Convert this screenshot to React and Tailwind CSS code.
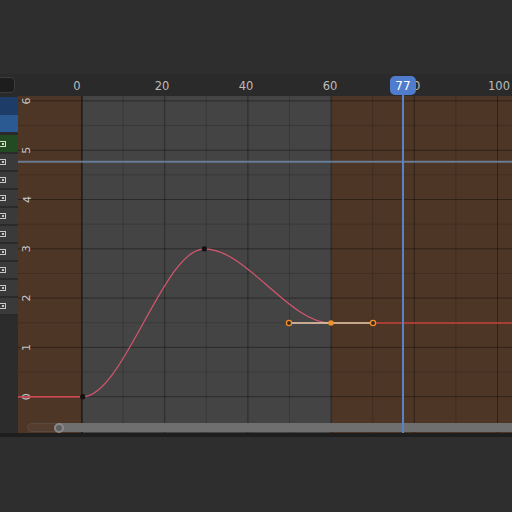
import React from "react";

const F = { fontFamily: '"DejaVu Sans", "Liberation Sans", sans-serif' };

const vx = (k) => 81.5 + 41.6 * k;
const vy = (k) => 396.7 - 49.3 * k;

function Graph() {
  const vLines = [];
  for (let k = 0; k <= 11; k++) {
    vLines.push(
      <line key={"v" + k} x1={vx(k)} x2={vx(k)} y1={96} y2={433}
        stroke={k % 2 === 0 ? "rgba(0,0,0,0.38)" : "rgba(0,0,0,0.16)"} strokeWidth={1} />
    );
  }
  const hLines = [];
  for (let k = 0; k <= 13; k++) {
    const y = vy(k / 2);
    hLines.push(
      <line key={"h" + k} x1={18} x2={512} y1={y} y2={y}
        stroke={k % 2 === 0 ? "rgba(0,0,0,0.38)" : "rgba(0,0,0,0.16)"} strokeWidth={1} />
    );
  }
  const labels = [0, 1, 2, 3, 4, 5, 6].map((v) => (
    <text key={"l" + v} x={27} y={vy(v)} transform={`rotate(-90 27 ${vy(v)})`}
      textAnchor="middle" dominantBaseline="central" fill="#c9c9c9" fontSize="11" style={F}>
      {v}
    </text>
  ));
  return (
    <svg width="494" height="337" viewBox="18 96 494 337" className="block">
      <rect x="18" y="96" width="494" height="337" fill="#4e3626" />
      <rect x="82" y="96" width="249" height="337" fill="#444444" />
      {vLines}
      {hLines}
      <line x1="82" x2="82" y1="96" y2="433" stroke="#1e1a17" strokeWidth="1.2" />
      <line x1="18" x2="512" y1="161.7" y2="161.7" stroke="#6f86a6" strokeWidth="2" opacity="0.85" />
      {labels}
      <path d="M18,396.7 L82.7,396.7 C123.2,396.7 163.8,248.8 204.3,248.8 C246.5,248.8 289,323 331,323"
        fill="none" stroke="#d4566f" strokeWidth="1.2" />
      <line x1="18" x2="82.7" y1="396.7" y2="396.7" stroke="#cc4a55" strokeWidth="1.4" />
      <line x1="373" x2="512" y1="323" y2="323" stroke="#c8443c" strokeWidth="1.4" />
      <line x1="289" x2="373" y1="323" y2="323" stroke="#f0d2b0" strokeWidth="1.3" />
      <circle cx="82.7" cy="396.7" r="2.6" fill="#111" />
      <circle cx="204.3" cy="248.8" r="2.6" fill="#111" />
      <circle cx="289" cy="323" r="2.6" fill="#3a2a1c" stroke="#f0902a" strokeWidth="1.3" />
      <circle cx="373" cy="323" r="2.6" fill="#3a2a1c" stroke="#f0902a" strokeWidth="1.3" />
      <circle cx="331" cy="323" r="2.8" fill="#f0902a" />
    </svg>
  );
}

function Ruler() {
  const items = [
    [77, "0"], [162, "20"], [246, "40"], [330, "60"], [413, "80"], [499, "100"],
  ];
  return (
    <svg width="494" height="22" viewBox="18 74 494 22" className="block">
      {items.map(([x, t]) => (
        <text key={t} x={x} y={86} textAnchor="middle" dominantBaseline="central"
          fill="#bdbdbd" fontSize="11.5" style={F}>{t}</text>
      ))}
    </svg>
  );
}

function ChanIcon({ green }) {
  return (
    <div className={`w-[7px] h-[6px] border ${green ? "border-[#cfe0c8]" : "border-[#c8c8c8]"} flex items-center justify-center ml-[-1px]`}>
      <div className={`w-[2px] h-[2px] ${green ? "bg-[#cfe0c8]" : "bg-[#c8c8c8]"}`} />
    </div>
  );
}

function Channels() {
  const grays = Array.from({ length: 9 });
  return (
    <div className="w-[18px] h-[337px] bg-[#2c2c2c] flex flex-col">
      <div className="h-[19px] bg-[#1d3d68] border-t border-[#2a2a2a]" />
      <div className="h-[17px] bg-[#2b5a93]" />
      <div className="h-[3px] bg-[#2a2a2a]" />
      <div className="h-[17px] bg-[#244a24] flex items-center border-b-[2px] border-[#2a2a2a] box-content">
        <ChanIcon green />
      </div>
      {grays.map((_, i) => (
        <div key={i} className="h-[16px] bg-[#3a3a3a] flex items-center border-b-[2px] border-[#2a2a2a] box-content">
          <ChanIcon />
        </div>
      ))}
    </div>
  );
}

export default function App() {
  return (
    <div className="w-[512px] h-[512px] bg-[#2e2e2e] flex flex-col overflow-hidden" style={F}>
      <div className="h-[74px] shrink-0" />
      <div className="relative flex flex-col">
        <div className="h-[22px] flex bg-[#2a2a2a]">
          <div className="w-[18px] flex items-center">
            <div className="w-[18px] h-[16px] ml-[-3px] rounded-[4px] bg-[#1d1d1d] border border-[#3d3d3d]" />
          </div>
          <Ruler />
        </div>
        <div className="flex h-[337px]">
          <Channels />
          <div className="relative">
            <Graph />
            <div className="absolute left-[9px] top-[327px] right-0 h-[9px] flex items-center">
              <div className="w-[32px] h-[9px] rounded-l-full border border-[#5a4a40] bg-[rgba(255,255,255,0.04)]" />
              <div className="flex-1 h-[9px] bg-[#6f6f6f] relative">
                <div className="absolute left-[-5px] top-[-0.5px] w-[10px] h-[10px] rounded-full border-2 border-[#8a8a8a] bg-[#5f5f5f]" />
              </div>
            </div>
          </div>
        </div>
        <div className="absolute left-[402px] top-[20px] w-[2px] h-[339px] bg-[#5882c6]" />
        <div className="absolute left-[390px] top-[2px] w-[26px] h-[19px] rounded-[5px] bg-[#4f7ccc] flex items-center justify-center text-white text-[12px]">
          77
        </div>
      </div>
      <div className="h-[4px] bg-[#1e1e1e]" />
      <div className="flex-1 bg-[#2e2e2e]" />
    </div>
  );
}
